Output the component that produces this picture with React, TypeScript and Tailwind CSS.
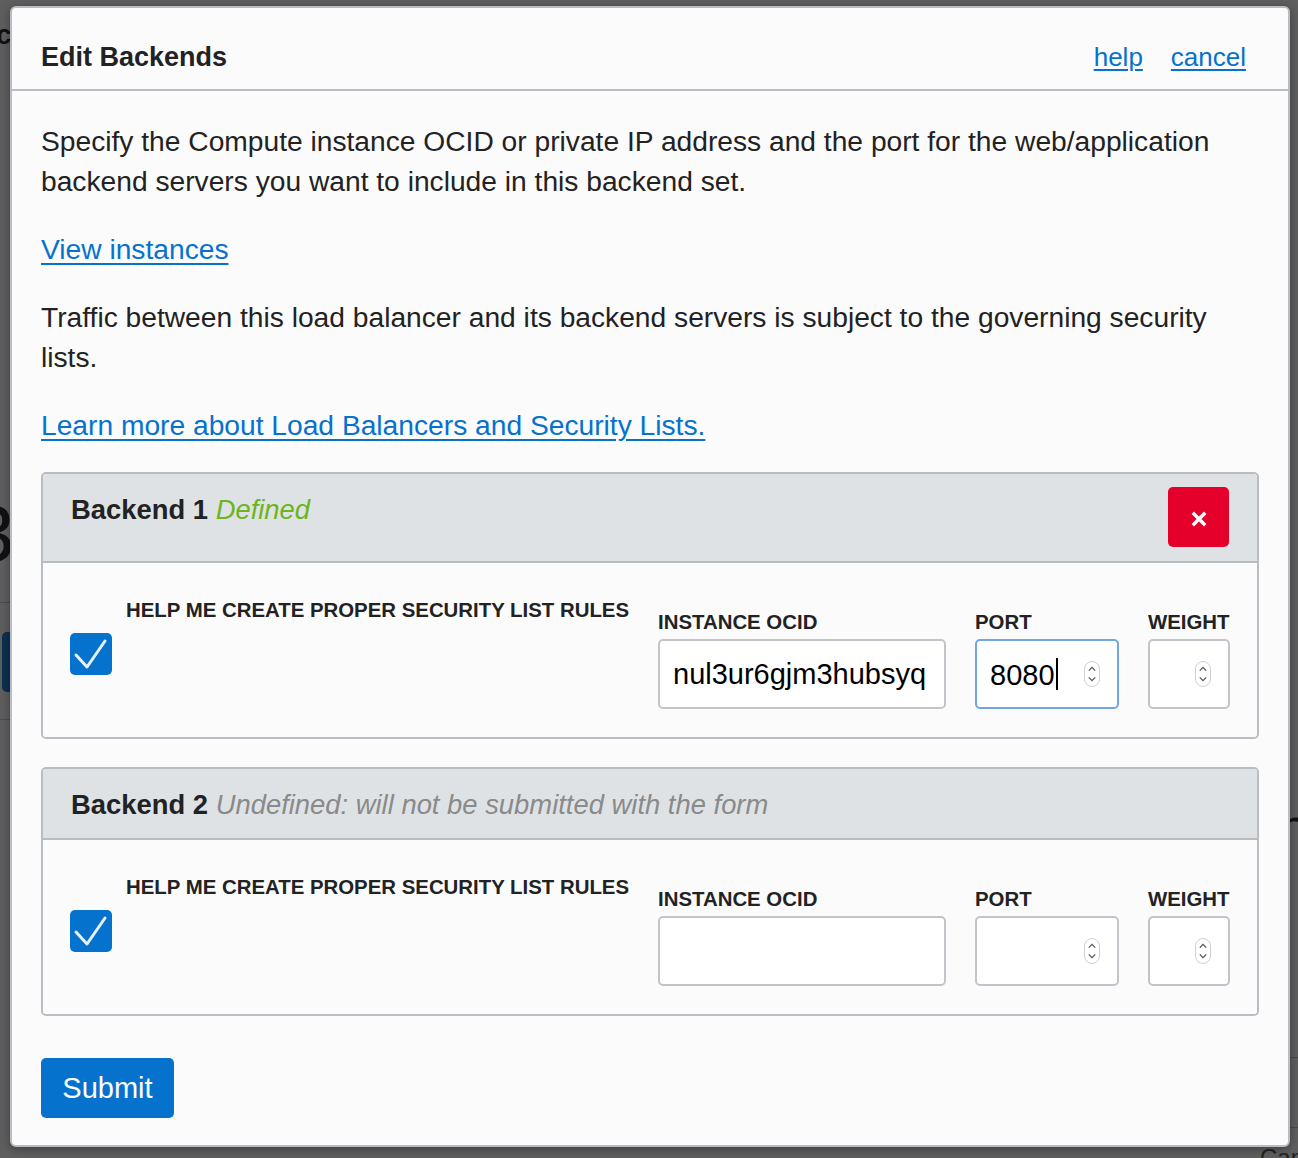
import React from 'react';

type Backend = {
  id: number;
  defined: boolean;
  ocid: string;
  port: string;
  weight: string;
};

const backends: Backend[] = [
  { id: 1, defined: true, ocid: 'nul3ur6gjm3hubsyq', port: '8080', weight: '' },
  { id: 2, defined: false, ocid: '', port: '', weight: '' },
];

function Spinner() {
  return (
    <svg width="16" height="26" viewBox="0 0 16 26" className="shrink-0">
      <rect x="0.5" y="0.5" width="15" height="25" rx="7.5" fill="#fff" stroke="#cfcfcf" />
      <path d="M4.8 9.6 L8 6.4 L11.2 9.6" fill="none" stroke="#555" strokeWidth="1.3" />
      <path d="M4.8 16.4 L8 19.6 L11.2 16.4" fill="none" stroke="#555" strokeWidth="1.3" />
    </svg>
  );
}

function CheckBox() {
  return (
    <div className="mt-[70px] h-[42px] w-[42px] shrink-0 rounded-[5px] bg-[#0572ce]">
      <svg width="42" height="42" viewBox="0 0 42 42">
        <path d="M6 22 L17 34 L35 8" fill="none" stroke="#e8f1fb" strokeWidth="3" strokeLinecap="round" strokeLinejoin="round" />
      </svg>
    </div>
  );
}

function Field({
  label,
  width,
  value,
  focused,
  number,
}: {
  label: string;
  width: string;
  value: string;
  focused?: boolean;
  number?: boolean;
}) {
  return (
    <div className={`mt-[47px] shrink-0 ${width}`}>
      <div className="text-[20.4px] font-bold uppercase leading-[24px] text-[#222]">{label}</div>
      <div
        className={`mt-[5px] flex h-[70px] items-center rounded-[5px] border-2 bg-white pl-[13px] ${
          number ? 'pr-[17px]' : 'pr-[4px]'
        } ${focused ? 'border-[#72a6e0]' : 'border-[#c1c5ca]'}`}
      >
        <span className="flex-1 overflow-hidden whitespace-nowrap text-[29px] text-black">
          {value}
          {focused && <span className="ml-[1px] inline-block h-[32px] w-[2px] translate-y-[5px] bg-black" />}
        </span>
        {number && <Spinner />}
      </div>
    </div>
  );
}

function BackendCard({ b, onRemove }: { b: Backend; onRemove?: () => void }) {
  return (
    <div className="overflow-hidden rounded-[5px] border-2 border-[#b8bdc3]">
      {/* Card header */}
      <div className="flex items-start justify-between border-b-2 border-[#b8bdc3] bg-[#dfe2e5] px-[28px]">
        <div className="pb-[13px] pt-[16px] text-[27.4px] leading-[40px]">
          <span className="font-bold text-[#222]">Backend {b.id}</span>{' '}
          {b.defined ? (
            <span className="italic text-[#6cb51b]">Defined</span>
          ) : (
            <span className="italic text-[#8a8a8a]">Undefined: will not be submitted with the form</span>
          )}
        </div>
        {b.defined && (
          <button
            onClick={onRemove}
            className="mb-[14px] mt-[13px] flex h-[60px] w-[61px] items-center justify-center rounded-[5px] bg-[#e4002b]"
          >
            <svg width="16" height="16" viewBox="0 0 16 16" className="translate-y-[2px]">
              <path d="M3 3 L13 13 M13 3 L3 13" stroke="#fff" strokeWidth="3.4" strokeLinecap="square" />
            </svg>
          </button>
        )}
      </div>

      {/* Card body */}
      <div className="flex items-start bg-[#fbfbfc] pb-[28px] pl-[27px] pr-[27px]">
        <CheckBox />
        <div className="ml-[14px] mt-[35px] min-w-0 flex-1 whitespace-nowrap text-[20.4px] font-bold uppercase leading-[24px] text-[#222]">
          Help me create proper security list rules
        </div>
        <div className="ml-[28px] flex gap-[29px]">
          <Field label="Instance OCID" width="w-[288px]" value={b.ocid} />
          <Field label="Port" width="w-[144px]" value={b.port} focused={b.defined} number />
          <Field label="Weight" width="w-[82px]" value={b.weight} number />
        </div>
      </div>
    </div>
  );
}

export default function App() {
  return (
    <div className="relative min-h-[1158px] w-full overflow-hidden bg-[#5e5e5e] pl-[10px] pt-[6px] font-['Liberation_Sans',Arial,sans-serif]">
      {/* dimmed page underneath the dialog */}
      <div className="absolute left-[-4px] top-[14px] text-[28px] font-bold text-[#111]">c</div>
      <div className="absolute left-[-30px] top-[494px] text-[80px] leading-[80px] text-[#111]">3</div>
      <div className="absolute left-0 top-[602px] h-[1px] w-[10px] bg-[#4a4a4a]" />
      <div className="absolute left-[2px] top-[632px] h-[60px] w-[20px] rounded-[5px] bg-[#0d3050]" />
      <div className="absolute left-0 top-[719px] h-[1px] w-[10px] bg-[#4a4a4a]" />
      <div className="absolute left-[1278px] top-[800px] text-[56px] leading-[56px] text-[#111]">n</div>
      <div className="absolute left-[1290px] top-[1057px] h-[1px] w-[10px] bg-[#4a4a4a]" />
      <div className="absolute left-[1290px] top-[1127px] h-[1px] w-[10px] bg-[#4a4a4a]" />
      <div className="absolute left-[1260px] top-[1146px] text-[24px] leading-[24px] text-[#222]">Can</div>

      <div className="relative w-[1280px] rounded-[6px] border-2 border-[#b8bdc3] bg-[#fbfbfc] shadow-[0_2px_10px_rgba(0,0,0,0.35)]">
        {/* Header */}
        <div className="flex h-[83px] items-start justify-between border-b-2 border-[#b8bdc3] pl-[29px] pr-[42px] pt-[29px] leading-[40px]">
          <h2 className="text-[27px] font-bold text-[#222]">Edit Backends</h2>
          <div className="flex gap-[28px] text-[26px] text-[#0572ce]">
            <a href="#" className="underline underline-offset-[3px]">help</a>
            <a href="#" className="underline underline-offset-[3px]">cancel</a>
          </div>
        </div>

        {/* Body */}
        <div className="px-[29px] pb-[27px] pt-[30px] text-[28.2px] leading-[40px] text-[#222]">
          <p>
            Specify the Compute instance OCID or private IP address and the port for the web/application backend
            servers you want to include in this backend set.
          </p>
          <p className="mt-[28px]">
            <a href="#" className="text-[#0572ce] underline underline-offset-[4px]">View instances</a>
          </p>
          <p className="mt-[28px]">
            Traffic between this load balancer and its backend servers is subject to the governing security lists.
          </p>
          <p className="mt-[28px]">
            <a href="#" className="text-[#0572ce] underline underline-offset-[4px]">
              Learn more about Load Balancers and Security Lists.
            </a>
          </p>

          <div className="mt-[27px] flex flex-col gap-[28px]">
            {backends.map((b) => (
              <BackendCard key={b.id} b={b} />
            ))}
          </div>

          <button className="mt-[42px] h-[60px] w-[133px] rounded-[5px] bg-[#0572ce] text-[29px] text-white">
            Submit
          </button>
        </div>
      </div>
    </div>
  );
}
